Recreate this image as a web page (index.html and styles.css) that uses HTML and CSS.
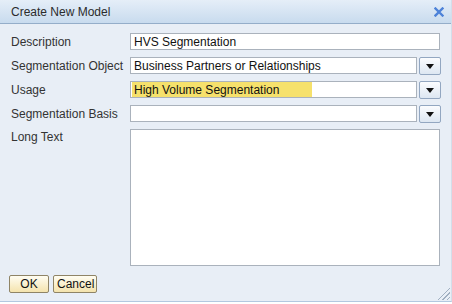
FILE: index.html
```html
<!DOCTYPE html>
<html lang="en">

<head>
    <meta charset="UTF-8" />
    <title>Create New Model</title>
    <link rel="stylesheet" href="styles.css">
</head>

<body>
    <div class="dialog">
        <div class="titlebar">
            <span class="title">Create New Model</span>
            <svg class="close" width="10" height="10" viewBox="0 0 10 10">
                <path d="M1.5 1.5 L8.5 8.5 M8.5 1.5 L1.5 8.5" stroke="#4d82d8" stroke-width="2.4" stroke-linecap="square" />
            </svg>
        </div>

        <div class="form">
            <label>Description</label>
            <div class="field">HVS Segmentation</div>

            <label>Segmentation Object</label>
            <div class="combo">
                <div class="field">Business Partners or Relationships</div>
                <span class="drop"></span>
            </div>

            <label>Usage</label>
            <div class="combo">
                <div class="field"><span class="hilite">High Volume Segmentation</span></div>
                <span class="drop"></span>
            </div>

            <label>Segmentation Basis</label>
            <div class="combo">
                <div class="field"></div>
                <span class="drop"></span>
            </div>

            <label class="top">Long Text</label>
            <div class="field area"></div>
        </div>

        <div class="footer">
            <button class="btn ok">OK</button>
            <button class="btn cancel">Cancel</button>
        </div>

        <div class="grip"></div>
    </div>
</body>

</html>
```

FILE: styles.css
```css
html,
body {
    margin: 0;
    padding: 0;
}

body {
    width: 452px;
    height: 304px;
    overflow: hidden;
    font-family: "Liberation Sans", Arial, sans-serif;
    font-size: 12px;
    color: #222;
}

.dialog {
    position: relative;
    height: 301px;
    display: flex;
    flex-direction: column;
    background-color: #e8eef6;
    border-bottom: 1px solid #b3c8e0;
    border-right: 1px solid #d3deea;
}

/* TITLE */
.titlebar {
    height: 23px;
    display: flex;
    align-items: center;
    justify-content: space-between;
    padding: 0 7px 0 11px;
    background: linear-gradient(#e5eef8, #c8dbee);
    border-bottom: 1px solid #94adc9;
}

.title {
    color: #2b2b2b;
}

/* FORM */
.form {
    display: grid;
    grid-template-columns: 119px 1fr;
    grid-auto-rows: 17px;
    row-gap: 7px;
    padding: 9px 11px 0 11px;
}

.form label {
    display: flex;
    align-items: center;
    color: #333;
}

.form label.top {
    align-items: flex-start;
    padding-top: 1px;
}

.field {
    box-sizing: border-box;
    height: 17px;
    background: white;
    border: 1px solid #aab2bc;
    padding: 1px 4px 0 3px;
    line-height: 15px;
    color: #111;
    white-space: nowrap;
    overflow: hidden;
}

.combo {
    display: flex;
    align-items: center;
    gap: 2px;
    margin-right: -1px;
}

.combo .field {
    flex: 1;
}

.drop {
    box-sizing: border-box;
    width: 22px;
    height: 18px;
    border: 1px solid #93a7c1;
    border-radius: 2px;
    background: linear-gradient(#fbfcfe, #dde7f2);
    display: flex;
    align-items: center;
    justify-content: center;
}

.drop::after {
    content: "";
    border-left: 4px solid transparent;
    border-right: 4px solid transparent;
    border-top: 5px solid #111;
    margin-top: 1px;
}

.hilite {
    display: inline-block;
    width: 178px;
    margin: -1px 0 0 -2px;
    padding: 1px 0 0 2px;
    background-color: #f6e16c;
}

.area {
    height: 137px;
}

/* FOOTER */
.footer {
    margin-top: auto;
    display: flex;
    gap: 4px;
    padding: 0 0 8px 9px;
}

.btn {
    height: 18px;
    padding: 0 3px;
    font-family: "Liberation Sans", Arial, sans-serif;
    font-size: 12px;
    color: #111;
    background: linear-gradient(#fffdf2, #f4e3ad);
    border: 1px solid #8f8466;
    border-radius: 2px;
}

.btn.ok {
    width: 40px;
}

.btn.cancel {
    width: 44px;
}

.grip {
    position: absolute;
    right: 1px;
    bottom: 1px;
    width: 14px;
    height: 14px;
    background: repeating-linear-gradient(135deg, transparent 0 2px, #a0afc1 2px 3px);
    clip-path: polygon(100% 0, 100% 100%, 0 100%);
}
```
